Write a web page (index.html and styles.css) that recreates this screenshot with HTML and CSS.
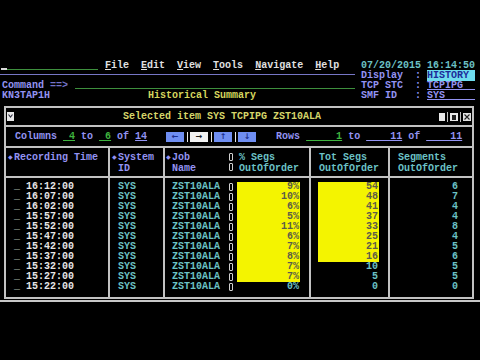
FILE: index.html
```html
<!DOCTYPE html>
<html>
<head>
<meta charset="utf-8">
<link rel="stylesheet" href="styles.css">
</head>
<body>
<div class="screen">
  <div class="top">
    <div class="left">
      <div class="row"><span class="cursor"></span><span class="mfield"></span><span class="menuitems"><u>F</u>ile  <u>E</u>dit  <u>V</u>iew  <u>T</u>ools  <u>N</u>avigate  <u>H</u>elp</span></div>
      <div class="row"><span class="rule"></span></div>
      <div class="row ind"><span class="lav">Command </span><span class="dim">==&gt;</span><span class="cmdfield"></span></div>
      <div class="row ind"><span class="lav">KN3TAP1H</span><span class="yel apptitle">Historical Summary</span></div>
    </div>
    <div class="right">
      <div class="row turq">07/20/2015 16:14:50</div>
      <div class="row"><span class="lav">Display  : </span><span class="hist">HISTORY </span></div>
      <div class="row"><span class="lav">TCP STC  : </span><span class="lav ul">TCPIPG  </span></div>
      <div class="row"><span class="lav">SMF ID   : </span><span class="lav ul">SYS     </span></div>
    </div>
  </div>

  <div class="win">
    <div class="titlebar">
      <span class="dd"><svg width="7" height="9" viewBox="0 0 7 9"><rect x="0" y="0" width="7" height="9" fill="#e8e8e8"/><path d="M1.5 2.5 L3.5 5 L5.5 2.5" stroke="#303040" stroke-width="1.2" fill="none"/></svg></span>
      <span class="wtitle">Selected item SYS TCPIPG ZST10ALA</span>
      <span class="wctl"><svg width="34" height="10" viewBox="0 0 34 10"><rect x="1" y="1" width="6" height="8" fill="#e8e8e8"/><rect x="9" y="0" width="1" height="10" fill="#bdbdbd"/><rect x="12" y="1" width="8" height="8" fill="#e8e8e8"/><rect x="14" y="3" width="4" height="5" fill="#202020"/><rect x="22" y="0" width="1" height="10" fill="#bdbdbd"/><rect x="25" y="1" width="8" height="8" fill="#e0e0e0"/><path d="M26.5 2.5 L31.5 7.5 M31.5 2.5 L26.5 7.5" stroke="#202020" stroke-width="1.1"/></svg></span>
    </div>
    <div class="colsrow">
      <span class="grp"><span class="lav">Columns </span><span class="grn ul"> 4</span><span class="lav"> to </span><span class="grn ul"> 6</span><span class="lav"> of </span><span class="lav ul">14</span></span>
      <span class="btns">
        <span class="btn blue">←</span><span class="bsep"></span><span class="btn white">→</span><span class="bsep"></span><span class="btn blue">↑</span><span class="bsep"></span><span class="btn blue">↓</span>
      </span>
      <span class="grp rows"><span class="lav">Rows </span><span class="grn ul">     1</span><span class="lav"> to </span><span class="lav ul">    11</span><span class="lav"> of </span><span class="lav ul">    11</span></span>
    </div>
    <div class="tbl">
      <div class="col c1 sep">
        <div class="hd lav"><div class="hl"><span class="dia">◆</span>Recording Time</div><div class="hl"> </div></div>
        <div class="bd">
          <div class="dr"><span class="sel">_</span> <span class="wht">16:12:00</span></div>
          <div class="dr"><span class="sel">_</span> <span class="wht">16:07:00</span></div>
          <div class="dr"><span class="sel">_</span> <span class="wht">16:02:00</span></div>
          <div class="dr"><span class="sel">_</span> <span class="wht">15:57:00</span></div>
          <div class="dr"><span class="sel">_</span> <span class="wht">15:52:00</span></div>
          <div class="dr"><span class="sel">_</span> <span class="wht">15:47:00</span></div>
          <div class="dr"><span class="sel">_</span> <span class="wht">15:42:00</span></div>
          <div class="dr"><span class="sel">_</span> <span class="wht">15:37:00</span></div>
          <div class="dr"><span class="sel">_</span> <span class="wht">15:32:00</span></div>
          <div class="dr"><span class="sel">_</span> <span class="wht">15:27:00</span></div>
          <div class="dr"><span class="sel">_</span> <span class="wht">15:22:00</span></div>
        </div>
      </div>
      <div class="col c2 sep">
        <div class="hd lav"><div class="hl"><span class="dia">◆</span>System</div><div class="hl"> ID</div></div>
        <div class="bd turq">
          <div class="dr">SYS</div><div class="dr">SYS</div><div class="dr">SYS</div><div class="dr">SYS</div><div class="dr">SYS</div><div class="dr">SYS</div><div class="dr">SYS</div><div class="dr">SYS</div><div class="dr">SYS</div><div class="dr">SYS</div><div class="dr">SYS</div>
        </div>
      </div>
      <div class="col c3">
        <div class="hd lav"><div class="hl"><span class="dia">◆</span>Job</div><div class="hl"> Name</div></div>
        <div class="bd turq">
          <div class="dr">ZST10ALA</div><div class="dr">ZST10ALA</div><div class="dr">ZST10ALA</div><div class="dr">ZST10ALA</div><div class="dr">ZST10ALA</div><div class="dr">ZST10ALA</div><div class="dr">ZST10ALA</div><div class="dr">ZST10ALA</div><div class="dr">ZST10ALA</div><div class="dr">ZST10ALA</div><div class="dr">ZST10ALA</div>
        </div>
      </div>
      <div class="col ch">
        <div class="hd"><div class="hr"></div><div class="hr"></div></div>
        <div class="bd">
          <div class="hr"></div><div class="hr"></div><div class="hr"></div><div class="hr"></div><div class="hr"></div><div class="hr"></div><div class="hr"></div><div class="hr"></div><div class="hr"></div><div class="hr"></div><div class="hr"></div>
        </div>
      </div>
      <div class="col c4 sep">
        <div class="hd turq"><div class="hl">% Segs</div><div class="hl">OutOfOrder</div></div>
        <div class="bd">
          <div class="dr num bar">9%</div><div class="dr num bar">10%</div><div class="dr num bar">6%</div><div class="dr num bar">5%</div><div class="dr num bar">11%</div><div class="dr num bar">6%</div><div class="dr num bar">7%</div><div class="dr num bar">8%</div><div class="dr num bar">7%</div><div class="dr num bar">7%</div><div class="dr num turq">0%</div>
        </div>
      </div>
      <div class="col c5 sep">
        <div class="hd turq"><div class="hl">Tot Segs</div><div class="hl">OutOfOrder</div></div>
        <div class="bd">
          <div class="dr num bar">54</div><div class="dr num bar">48</div><div class="dr num bar">41</div><div class="dr num bar">37</div><div class="dr num bar">33</div><div class="dr num bar">25</div><div class="dr num bar">21</div><div class="dr num bar">16</div><div class="dr num turq">10</div><div class="dr num turq">5</div><div class="dr num turq">0</div>
        </div>
      </div>
      <div class="col c6">
        <div class="hd turq"><div class="hl">Segments</div><div class="hl">OutOfOrder</div></div>
        <div class="bd turq">
          <div class="dr num">6</div><div class="dr num">7</div><div class="dr num">4</div><div class="dr num">4</div><div class="dr num">8</div><div class="dr num">4</div><div class="dr num">5</div><div class="dr num">6</div><div class="dr num">5</div><div class="dr num">5</div><div class="dr num">0</div>
        </div>
      </div>
    </div>
  </div>
  <div class="hline"></div>
</div>
</body>
</html>
```

FILE: styles.css
```css
* { box-sizing: border-box; margin: 0; padding: 0; }
html, body { background: #000; }
body {
  width: 480px;
  height: 360px;
  overflow: hidden;
  font-family: "Liberation Mono", "DejaVu Sans Mono", monospace;
  font-size: 10px;
  line-height: 10px;
  font-weight: bold;
  color: #dcdcdc;
}
.screen { padding-top: 61px; }

.lav { color: #9393f2; }
.dim { color: #7373c8; }
.turq { color: #6cc2c6; }
.yel { color: #d6d65e; }
.grn { color: #3fb43f; }
.wht { color: #e6e6e6; }
.ul { text-decoration: underline; text-underline-offset: 1px; }
u { text-underline-offset: 1px; }

.top { display: flex; }
.left { width: 355px; }
.right { margin-left: 6px; }
.row { height: 10px; white-space: pre; }
.ind { padding-left: 2px; }

.cursor, .mfield, .cmdfield, .rule { display: inline-block; vertical-align: top; }
.cursor { width: 6px; height: 9px; margin-left: 1px; border-bottom: 2px solid #d8d8d8; }
.mfield { width: 91px; height: 9px; border-bottom: 1px solid #3d8f3d; }
.menuitems { margin-left: 7px; color: #e0e0e0; }
.rule { width: 355px; height: 1px; margin-top: 3px; background: #7676c6; }
.cmdfield { width: 280px; height: 8px; margin-left: 7px; border-bottom: 1px solid #3d8f3d; }
.apptitle { margin-left: 98px; }
.hist { background: #6fdcee; color: #1c2a9a; }

.win {
  margin: 5px 0 0 4px;
  width: 470px;
  border: 2px solid #c2c2c2;
}
.titlebar {
  height: 19px;
  display: flex;
  align-items: center;
  border-bottom: 2px solid #c2c2c2;
}
.dd { display: flex; margin-left: 1px; }
.wtitle { margin-left: 109px; color: #d6d66a; white-space: pre; }
.wctl { display: flex; margin-left: auto; }

.colsrow {
  height: 21px;
  display: flex;
  align-items: center;
  padding-left: 9px;
  border-bottom: 2px solid #c2c2c2;
}
.grp { white-space: pre; }
.btns { display: flex; margin-left: 19px; }
.btn {
  width: 18px;
  height: 10px;
  display: flex;
  align-items: center;
  justify-content: center;
  font-family: "DejaVu Sans", sans-serif;
  font-size: 8px;
  font-weight: bold;
}
.blue { background: #6f8ef2; color: #1a2c8c; }
.white { background: #f2f2f2; color: #202020; }
.bsep { width: 6px; display: flex; justify-content: center; }
.bsep::before { content: ""; width: 1px; height: 10px; background: #e8e8e8; }
.rows { margin-left: 20px; }

.tbl { display: flex; height: 149px; }
.col { display: flex; flex-direction: column; }
.sep { border-right: 2px solid #c2c2c2; }
.hd {
  height: 30px;
  padding-top: 4px;
  border-bottom: 2px solid #c2c2c2;
  white-space: pre;
}
.hl { height: 11px; line-height: 11px; }
.dia { display: inline-block; width: 6px; font-family: "DejaVu Sans", sans-serif; font-size: 6px; vertical-align: top; line-height: 9px; }
.bd { padding-top: 4px; }
.dr { height: 10px; white-space: pre; }
.sel { color: #a4b4a4; }

.c1 { width: 104px; }
.c1 .hd { padding-left: 2px; }
.c1 .bd { padding-left: 8px; }
.c2 { width: 55px; }
.c2 .hd { padding-left: 2px; }
.c2 .bd { padding-left: 8px; }
.c3 { width: 64px; }
.c3 .hd { padding-left: 1px; }
.c3 .bd { padding-left: 7px; }
.ch { width: 4px; }
.ch .hd { padding-top: 5px; }
.hr { width: 4px; height: 8px; margin-bottom: 2px; border: 1px solid #d0d0d0; border-radius: 1px; }
.ch .bd { padding-top: 5px; }
.c4 { width: 78px; }
.c4 .hd { padding-left: 6px; }
.c4 .bd { padding-left: 4px; }
.c4 .dr { width: 63px; }
.c5 { width: 79px; }
.c5 .hd { padding-left: 8px; }
.c5 .bd { padding-left: 7px; }
.c5 .dr { width: 61px; }
.c6 { width: 82px; }
.c6 .hd { padding-left: 8px; }
.c6 .bd { padding-right: 14px; }
.num { text-align: right; padding-right: 1px; }
.c6 .num { padding-right: 0; }
.bar { background: #f4f400; color: #5c5c48; }

.hline { height: 2px; margin-top: 1px; background: #c8c8c8; }
```
